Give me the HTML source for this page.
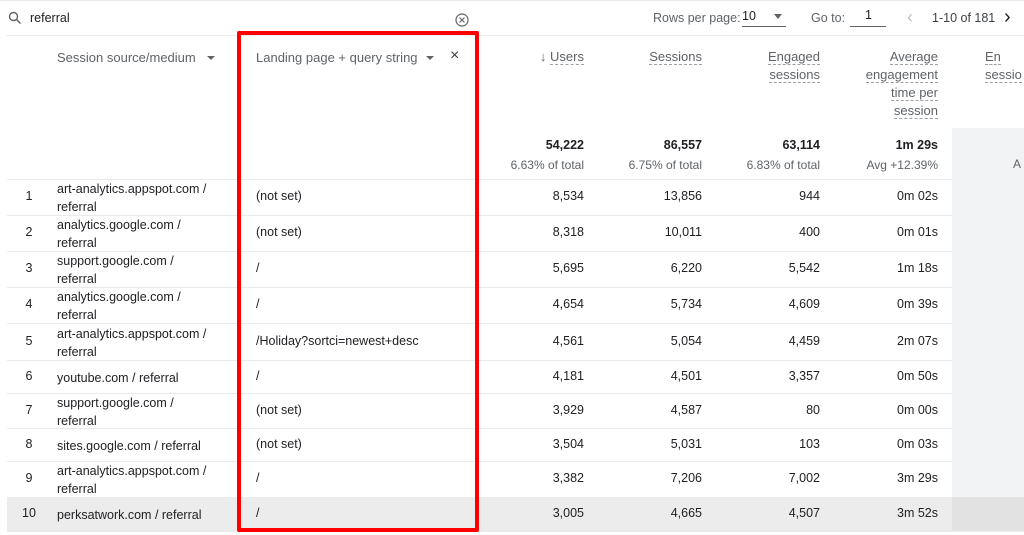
<!DOCTYPE html><html><head><style>
body{margin:0;width:1024px;height:534px;overflow:hidden;background:#fff;font-family:"Liberation Sans",sans-serif;color:#202124;position:relative}
.a{position:absolute;white-space:nowrap}
.r{text-align:right}
.h{color:#5f6368;font-size:13px}
.u{border-bottom:1px dashed #9aa0a6;line-height:17px}
.row{position:absolute;left:7px;width:1017px;border-top:1px solid #e8eaed;background:#fff}
.c{font-size:12.5px}
.s{font-size:12px;color:#5f6368}
</style></head><body>
<div class="a" style="left:0;top:0;width:1024px;height:1px;background:#e8eaed"></div>
<div class="a" style="left:6px;top:35px;width:1018px;height:1px;background:#eceff1"></div>
<svg class="a" style="left:8px;top:11px" width="14" height="14" viewBox="0 0 14 14"><circle cx="5.5" cy="5.5" r="4" fill="none" stroke="#5f6368" stroke-width="1.4"/><path d="M8.5 8.5L12.5 12.5" stroke="#5f6368" stroke-width="1.5"/></svg>
<div class="a c" style="left:30px;top:11px">referral</div>
<svg class="a" style="left:455px;top:13px" width="14" height="14" viewBox="0 0 14 14"><circle cx="7" cy="7" r="6" fill="none" stroke="#5f6368" stroke-width="1.2"/><path d="M4.5 4.5L9.5 9.5M9.5 4.5L4.5 9.5" stroke="#5f6368" stroke-width="1.2"/></svg>
<div class="a h" style="left:653px;top:11px;font-size:12.5px">Rows per page:</div>
<div class="a c" style="left:742px;top:9px">10</div>
<div class="a" style="left:742px;top:26px;width:44px;height:1px;background:#5f6368"></div>
<div class="a" style="left:774px;top:14px;border:4px solid transparent;border-top:5px solid #5f6368"></div>
<div class="a h" style="left:811px;top:11px;font-size:12.5px">Go to:</div>
<div class="a c" style="left:865px;top:8px">1</div>
<div class="a" style="left:850px;top:26px;width:36px;height:1px;background:#5f6368"></div>
<div class="a" style="left:907px;top:7px;font-size:18px;color:#bdc1c6">&#8249;</div>
<div class="a c" style="left:932px;top:11px;color:#3c4043">1-10 of 181</div>
<div class="a" style="left:1004px;top:6px;font-size:20px;color:#202124">&#8250;</div>

<div class="a h" style="left:57px;top:50px">Session source/medium</div>
<div class="a" style="left:207px;top:56px;border:4px solid transparent;border-top:4px solid #5f6368"></div>
<div class="a h" style="left:256px;top:50px">Landing page + query string</div>
<div class="a" style="left:426px;top:56px;border:4px solid transparent;border-top:4px solid #5f6368"></div>
<div class="a" style="left:450px;top:47px;font-size:16px;color:#3c4043">×</div>
<div class="a h r" style="right:440px;top:48px;color:#5f6368">↓ <span class="u">Users</span></div>
<div class="a h r" style="right:322px;top:48px"><span class="u">Sessions</span></div>
<div class="a h r" style="right:204px;top:48px;line-height:18px"><span class="u">Engaged</span><br><span class="u">sessions</span></div>
<div class="a h r" style="right:86px;top:48px;line-height:18px"><span class="u">Average</span><br><span class="u">engagement</span><br><span class="u">time per</span><br><span class="u">session</span></div>
<div class="a h" style="left:985px;top:48px;line-height:18px"><span class="u">En</span><br><span class="u">sessio</span></div>
<div class="a" style="left:952px;top:128px;width:72px;height:51px;background:#f1f3f4"></div>
<div class="a s" style="left:1013px;top:157px">A</div>
<div class="a c r" style="right:440px;top:138px;font-weight:bold">54,222</div>
<div class="a c r" style="right:322px;top:138px;font-weight:bold">86,557</div>
<div class="a c r" style="right:204px;top:138px;font-weight:bold">63,114</div>
<div class="a c r" style="right:86px;top:138px;font-weight:bold">1m 29s</div>
<div class="a s r" style="right:440px;top:158px">6.63% of total</div>
<div class="a s r" style="right:322px;top:158px">6.75% of total</div>
<div class="a s r" style="right:204px;top:158px">6.83% of total</div>
<div class="a s r" style="right:86px;top:158px">Avg +12.39%</div>

<div id="rows"></div>
<script>
var d=[[179,36,1,"art-analytics.appspot.com /<br>referral","(not set)","8,534","13,856","944","0m 02s"],
[215,36,2,"analytics.google.com /<br>referral","(not set)","8,318","10,011","400","0m 01s"],
[251,36,3,"support.google.com /<br>referral","/","5,695","6,220","5,542","1m 18s"],
[287,36,4,"analytics.google.com /<br>referral","/","4,654","5,734","4,609","0m 39s"],
[323,37,5,"art-analytics.appspot.com /<br>referral","/Holiday?sortci=newest+desc","4,561","5,054","4,459","2m 07s"],
[360,33,6,"youtube.com / referral","/","4,181","4,501","3,357","0m 50s"],
[393,35,7,"support.google.com /<br>referral","(not set)","3,929","4,587","80","0m 00s"],
[428,33,8,"sites.google.com / referral","(not set)","3,504","5,031","103","0m 03s"],
[461,36,9,"art-analytics.appspot.com /<br>referral","/","3,382","7,206","7,002","3m 29s"],
[497,34,10,"perksatwork.com / referral","/","3,005","4,665","4,507","3m 52s"]];
var h="";d.forEach(function(r,i){var bg=i==9?"#ececec":"#fff";var m=r[0]+r[1]/2;
h+='<div class="row" style="top:'+r[0]+'px;height:'+r[1]+'px;background:'+bg+'"></div>';
h+='<div class="a" style="left:952px;top:'+r[0]+'px;width:72px;height:'+(r[1]+1)+'px;background:'+(i==9?'#e2e2e2':'#f1f3f4')+'"></div>';
h+='<div class="a c r" style="left:14px;width:30px;top:'+(m-8)+'px;text-align:center">'+r[2]+'</div>';
var two=r[3].indexOf("<br>")>0;
h+='<div class="a c" style="left:57px;top:'+(m-(two?17:8))+'px;line-height:18px">'+r[3]+'</div>';
h+='<div class="a c" style="left:256px;top:'+(m-8)+'px">'+r[4]+'</div>';
[440,322,204,86].forEach(function(x,j){h+='<div class="a c r" style="right:'+x+'px;top:'+(m-8)+'px">'+r[5+j]+'</div>';});});
h+='<div class="row" style="top:531px;height:3px"></div>';
document.getElementById("rows").innerHTML=h;
</script>
<div class="a" style="left:237px;top:31px;width:234px;height:493px;border:4px solid #f00;border-radius:2px"></div>
</body></html>
